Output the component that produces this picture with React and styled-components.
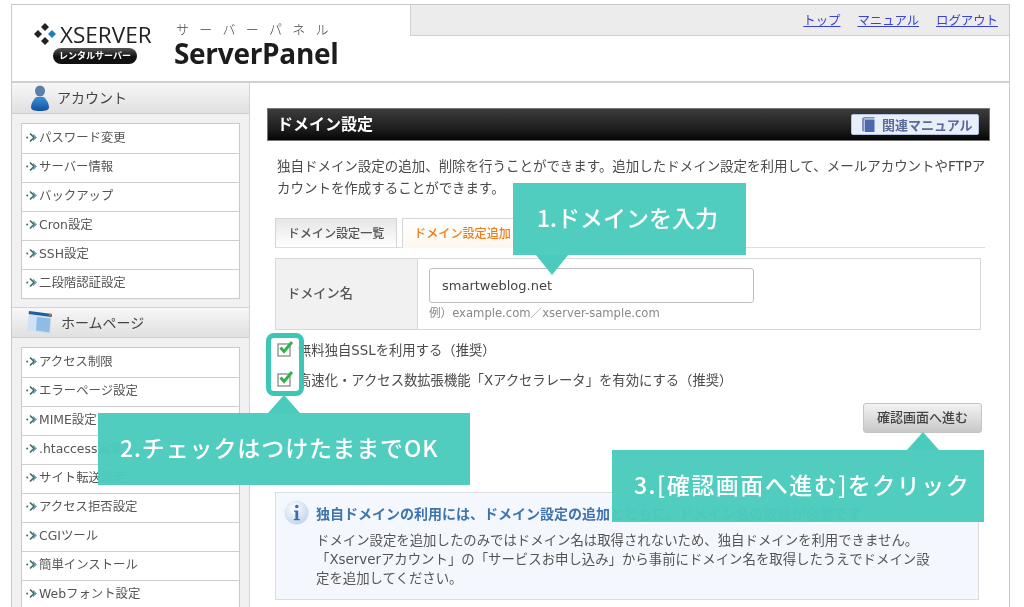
import styled, { createGlobalStyle } from "styled-components";

const GlobalStyle = createGlobalStyle`
  html, body {
    margin: 0;
    height: 607px;
    overflow: hidden;
    background: #fff;
  }
  * {
    box-sizing: border-box;
  }
  body {
    font-family: "DejaVu Sans", "Noto Sans CJK JP", sans-serif;
    color: #4a4a4a;
  }
`;

const Page = styled.div`
  position: relative;
  width: 1024px;
  height: 607px;
  overflow: hidden;
  padding: 4px 0 0 11px;
  filter: blur(0.3px);
`;

const Frame = styled.div`
  width: 999px;
  height: 640px;
  border: 1px solid #c9c9c9;
  border-width: 1.5px 1.5px 0 1.5px;
`;

const Header = styled.header`
  display: flex;
  height: 78px;
  border-bottom: 2px solid #d0d0d0;
`;

const LogoArea = styled.div`
  display: flex;
  width: 398px;
  padding: 13px 0 0 21px;
  gap: 21px;
`;

const Brand = styled.div`
  display: flex;
  flex-direction: column;
  width: 120px;
`;

const BrandRow = styled.div`
  display: flex;
  align-items: center;
  gap: 3px;
  height: 29px;
  padding-top: 3px;
`;

const BrandName = styled.span`
  font-family: "Open Sans", "Liberation Sans", sans-serif;
  font-size: 22.5px;
  color: #222;
`;

const RentalPill = styled.span`
  align-self: flex-start;
  margin: 1px 0 0 20px;
  width: 84px;
  height: 16px;
  line-height: 16px;
  border-radius: 8px;
  background: linear-gradient(#555, #111 55%);
  color: #fff;
  font-family: "Noto Sans CJK JP", sans-serif;
  font-size: 9px;
  font-weight: 700;
  text-align: center;
`;

const PanelTitle = styled.div`
  display: flex;
  flex-direction: column;
  padding-top: 2px;
`;

const PanelKana = styled.span`
  font-family: "Noto Sans CJK JP", sans-serif;
  font-size: 13px;
  font-weight: 300;
  line-height: 18px;
  letter-spacing: 10.3px;
  padding-left: 2px;
  color: #444;
`;

const PanelName = styled.span`
  font-family: "Open Sans", "Liberation Sans", sans-serif;
  font-size: 28px;
  font-weight: 700;
  line-height: 30px;
  color: #1c1c1c;
  letter-spacing: -0.3px;
`;

const TopLinks = styled.nav`
  flex: 1;
  display: flex;
  justify-content: flex-end;
  align-items: center;
  gap: 17px;
  height: 31px;
  padding-right: 11px;
  background: #ececec;
  border-left: 1.5px solid #d0d0d0;
  border-bottom: 1.5px solid #d0d0d0;
`;

const TopLink = styled.a`
  font-size: 12.4px;
  color: #3a3fe0;
  text-decoration: underline;
`;

const Body = styled.div`
  display: flex;
`;

const Sidebar = styled.aside`
  width: 238px;
  flex-shrink: 0;
  background: #f1f1f1;
  border-right: 1.5px solid #d4d4d4;
`;

const SectionHead = styled.div`
  display: flex;
  align-items: center;
  height: 31px;
  padding-left: ${(p) => p.$pad}px;
  gap: 8px;
  font-size: 14px;
  color: #444;
  background: linear-gradient(#f7f7f7, #e0e0e0);
  border-bottom: 1.5px solid #cfcfcf;
  border-top: ${(p) => (p.$first ? "0" : "1.5px solid #d4d4d4")};
`;

const SectionLabel = styled.span`
  padding-bottom: 2px;
`;

const Menu = styled.ul`
  list-style: none;
  margin: 9px 9px 8px 9px;
  padding: 0;
  background: #fff;
  border: 1.5px solid #cacaca;
`;

const MenuItem = styled.li`
  display: flex;
  align-items: center;
  height: 29px;
  padding: 0 0 ${(p) => (p.$first ? "3px" : "4px")} 4px;
  gap: 1px;
  font-size: 12.4px;
  color: #555;
  border-top: ${(p) => (p.$first ? "0" : "1.5px solid #cfcfcf")};
`;

const Main = styled.main`
  flex: 1;
  padding: 25px 19px 0 17px;
`;

const TitleBar = styled.div`
  display: flex;
  align-items: center;
  justify-content: space-between;
  height: 33px;
  padding: 0 10px 0 9px;
  background: linear-gradient(#3c3c3c, #1d1d1d 65%, #050505);
  border: 1px solid #777;
`;

const Title = styled.h1`
  margin: 0 0 3px 0;
  font-size: 16px;
  font-weight: 700;
  color: #fff;
`;

const ManualButton = styled.span`
  display: flex;
  align-items: center;
  gap: 7px;
  width: 128px;
  height: 21px;
  padding: 0 0 1px 10px;
  background: #e9eefb;
  border: 1px solid #b5c2e0;
  border-radius: 2px;
  font-size: 13px;
  font-weight: 700;
  color: #5a6a97;
`;

const Lead = styled.p`
  margin: 14px 0 19px 0;
  padding-left: 10px;
  font-size: 13.48px;
  line-height: 22px;
  white-space: nowrap;
  width: 720px;
`;

const Tabs = styled.div`
  display: flex;
  gap: 5px;
  width: 710px;
  margin-left: 8px;
  height: 30px;
  border-bottom: 1.5px solid #ddd;
`;

const Tab = styled.div`
  display: flex;
  align-items: center;
  justify-content: center;
  width: ${(p) => (p.$active ? "121px" : "122px")};
  height: 30px;
  padding-bottom: 2px;
  font-size: 12.1px;
  font-weight: 500;
  color: ${(p) => (p.$active ? "#f07d1a" : "#555")};
  background: ${(p) => (p.$active ? "linear-gradient(#fff, #fff7ee)" : "linear-gradient(#e6e6e6, #fff)")};
  border: 1.5px solid #d6d6d6;
  border-bottom: ${(p) => (p.$active ? "0" : "1.5px solid #ddd")};
`;

const FormTable = styled.div`
  display: flex;
  width: 706px;
  height: 72px;
  margin: 10px 0 0 8px;
  border: 1.5px solid #d8d8d8;
`;

const FieldLabel = styled.div`
  display: flex;
  align-items: center;
  width: 142px;
  padding: 0 0 3px 11px;
  background: #f1f1f1;
  border-right: 1.5px solid #d8d8d8;
  font-size: 13.2px;
  font-weight: 500;
  color: #555;
`;

const FieldCell = styled.div`
  flex: 1;
  padding: 9px 0 0 11px;
`;

const TextBox = styled.input`
  display: block;
  width: 325px;
  height: 35px;
  padding: 0 12px;
  border: 1.5px solid #bdbdbd;
  border-radius: 3px;
  font-family: "DejaVu Sans", sans-serif;
  font-size: 13px;
  color: #444;
  outline: none;
`;

const Hint = styled.div`
  margin-top: 2px;
  font-size: 11.6px;
  line-height: 16px;
  color: #888;
`;

const Checks = styled.div`
  margin: 4px 0 0 10px;
`;

const CheckRow = styled.div`
  display: flex;
  align-items: center;
  gap: 4px;
  height: 30px;
  font-size: 13.33px;
`;

const Actions = styled.div`
  display: flex;
  justify-content: flex-end;
  width: 715px;
  margin-top: 9px;
`;

const Confirm = styled.button`
  width: 119px;
  height: 30px;
  padding: 0 0 3px 0;
  background: linear-gradient(#f2f2f2, #c8c8c8);
  border: 1.5px solid #c4c4c4;
  border-radius: 3px;
  font-family: "Noto Sans CJK JP", sans-serif;
  font-size: 13px;
  font-weight: 500;
  color: #444;
`;

const InfoBox = styled.section`
  width: 704px;
  height: 108px;
  margin: 59px 0 0 8px;
  padding: 7px 0 0 8px;
  background: #f4f8fe;
  border: 1.5px solid #dcdcdc;
`;

const InfoHead = styled.div`
  display: flex;
  align-items: center;
  gap: 7px;
  font-size: 14px;
  font-weight: 700;
  color: #3f74ad;
  white-space: nowrap;
`;

const InfoText = styled.p`
  margin: 6px 0 0 32px;
  font-size: 13.4px;
  line-height: 19px;
  white-space: nowrap;
  color: #555;
`;

const Callout = styled.div`
  position: absolute;
  left: ${(p) => p.$left}px;
  top: ${(p) => p.$top}px;
  width: ${(p) => p.$width}px;
  height: 72px;
  display: flex;
  align-items: center;
  padding: 0 0 4px ${(p) => p.$pad}px;
  background: rgba(74, 203, 189, 0.97);
  color: #fff;
  font-family: "Noto Sans CJK JP", sans-serif;
  font-size: 23px;
  font-weight: 500;
  letter-spacing: ${(p) => p.$spacing}px;
  white-space: nowrap;

  &::after {
    content: "";
    position: absolute;
    left: ${(p) => p.$arrow}px;
    border-left: 16px solid transparent;
    border-right: 16px solid transparent;
    ${(p) => (p.$down
      ? "top: 100%; border-top: 20px solid #4acbbd;"
      : "bottom: 100%; border-bottom: 18px solid #4acbbd;")}
  }
`;

const Highlight = styled.div`
  position: absolute;
  left: 266px;
  top: 333px;
  width: 38px;
  height: 63px;
  border: 5px solid #3cc6b6;
  border-radius: 8px;
`;

const account = ["パスワード変更", "サーバー情報", "バックアップ", "Cron設定", "SSH設定", "二段階認証設定"];
const homepage = [
  "アクセス制限",
  "エラーページ設定",
  "MIME設定",
  ".htaccess編集",
  "サイト転送設定",
  "アクセス拒否設定",
  "CGIツール",
  "簡単インストール",
  "Webフォント設定",
];

function Bullet() {
  return (
    <svg width="12" height="11" viewBox="0 0 12 11">
      <circle cx="1.2" cy="5.5" r="1" fill="#3d6a70" />
      <path d="M4 1.5 8 5.5 4 9.5" fill="none" stroke="#3d6a70" strokeWidth="1.6" />
      <path d="M7 2.5 10 5.5 7 8.5" fill="none" stroke="#6f9ea3" strokeWidth="1.4" />
    </svg>
  );
}

function Diamonds() {
  return (
    <svg width="24" height="24" viewBox="0 0 24 24">
      <path d="M12 1 16 5 12 9 8 5Z" fill="#222" />
      <path d="M5 8 9 12 5 16 1 12Z" fill="#222" />
      <path d="M19 8 23 12 19 16 15 12Z" fill="#1f7fc4" />
      <path d="M12 15 16 19 12 23 8 19Z" fill="#222" />
    </svg>
  );
}

function PersonIcon() {
  return (
    <svg width="18" height="26" viewBox="0 0 18 26">
      <defs>
        <linearGradient id="personBody" x1="0" y1="0" x2="0" y2="1">
          <stop offset="0" stopColor="#3f8fd8" />
          <stop offset="1" stopColor="#0f4f9e" />
        </linearGradient>
      </defs>
      <ellipse cx="9" cy="6" rx="5" ry="5.5" fill="#5a7fa8" />
      <path d="M5 12h8c3 3 5 7 5 10 0 3-3 4-9 4s-9-1-9-4c0-3 2-7 5-10Z" fill="url(#personBody)" />
    </svg>
  );
}

function WindowIcon() {
  return (
    <svg width="26" height="26" viewBox="0 0 26 26">
      <path d="M2 1 25 4 23 24 0 21Z" fill="#cfe2f3" />
      <path d="M2 1 25 4 24.6 7 1.6 4Z" fill="#1f5f9e" />
      <path d="M22 3.6 24.8 4 24.6 6.4 21.8 6Z" fill="#d8632c" />
      <path d="M10 7 23.5 8.6 22.4 22.4 9 20.6Z" fill="#8fbce4" />
    </svg>
  );
}

function BookIcon() {
  return (
    <svg width="13" height="15" viewBox="0 0 13 15">
      <path d="M0 1.5 2 0H12.5V1.5H2.5V14.5H1L0 13.5Z" fill="#7d90c0" />
      <rect x="3" y="2.5" width="9.5" height="12.5" fill="#4c69ad" />
    </svg>
  );
}

function CheckIcon() {
  return (
    <svg width="17" height="17" viewBox="0 0 17 17">
      <rect x="1" y="3" width="12" height="12" fill="#fff" stroke="#8a8a8a" strokeWidth="1.3" />
      <path d="M3.5 6.5 7 10.5 15 1" fill="none" stroke="#2fb24a" strokeWidth="2.8" />
    </svg>
  );
}

function InfoIcon() {
  return (
    <svg width="25" height="25" viewBox="0 0 25 25">
      <defs>
        <radialGradient id="infoFill" cx="0.4" cy="0.35" r="0.75">
          <stop offset="0" stopColor="#ffffff" />
          <stop offset="1" stopColor="#bcd0ee" />
        </radialGradient>
      </defs>
      <circle cx="12.5" cy="12.5" r="12" fill="url(#infoFill)" />
      <circle cx="12.8" cy="6.5" r="1.8" fill="#3d6cae" />
      <path d="M10 10.5h4.2v8.5h1.6v1.2H9.8V19h1.6v-7.3H10Z" fill="#3d6cae" />
    </svg>
  );
}

export default function App() {
  return (
    <Page>
      <GlobalStyle />
      <Frame>
        <Header>
          <LogoArea>
            <Brand>
              <BrandRow>
                <Diamonds />
                <BrandName>XSERVER</BrandName>
              </BrandRow>
              <RentalPill>レンタルサーバー</RentalPill>
            </Brand>
            <PanelTitle>
              <PanelKana>サーバーパネル</PanelKana>
              <PanelName>ServerPanel</PanelName>
            </PanelTitle>
          </LogoArea>
          <TopLinks>
            <TopLink>トップ</TopLink>
            <TopLink>マニュアル</TopLink>
            <TopLink>ログアウト</TopLink>
          </TopLinks>
        </Header>
        <Body>
          <Sidebar>
            <SectionHead $first $pad={19}>
              <PersonIcon />
              <SectionLabel>アカウント</SectionLabel>
            </SectionHead>
            <Menu>
              {account.map((item, index) => (
                <MenuItem key={item} $first={index === 0}>
                  <Bullet />
                  {item}
                </MenuItem>
              ))}
            </Menu>
            <SectionHead $pad={15}>
              <WindowIcon />
              <SectionLabel>ホームページ</SectionLabel>
            </SectionHead>
            <Menu>
              {homepage.map((item, index) => (
                <MenuItem key={item} $first={index === 0}>
                  <Bullet />
                  {item}
                </MenuItem>
              ))}
            </Menu>
          </Sidebar>
          <Main>
            <TitleBar>
              <Title>ドメイン設定</Title>
              <ManualButton>
                <BookIcon />
                関連マニュアル
              </ManualButton>
            </TitleBar>
            <Lead>
              独自ドメイン設定の追加、削除を行うことができます。追加したドメイン設定を利用して、メールアカウントやFTPア
              <br />
              カウントを作成することができます。
            </Lead>
            <Tabs>
              <Tab>ドメイン設定一覧</Tab>
              <Tab $active>ドメイン設定追加</Tab>
            </Tabs>
            <FormTable>
              <FieldLabel>ドメイン名</FieldLabel>
              <FieldCell>
                <TextBox defaultValue="smartweblog.net" />
                <Hint>例）example.com／xserver-sample.com</Hint>
              </FieldCell>
            </FormTable>
            <Checks>
              <CheckRow>
                <CheckIcon />
                無料独自SSLを利用する（推奨）
              </CheckRow>
              <CheckRow>
                <CheckIcon />
                高速化・アクセス数拡張機能「Xアクセラレータ」を有効にする（推奨）
              </CheckRow>
            </Checks>
            <Actions>
              <Confirm>確認画面へ進む</Confirm>
            </Actions>
            <InfoBox>
              <InfoHead>
                <InfoIcon />
                独自ドメインの利用には、ドメイン設定の追加とともに、ドメイン名の取得が必要です
              </InfoHead>
              <InfoText>
                ドメイン設定を追加したのみではドメイン名は取得されないため、独自ドメインを利用できません。
                <br />
                「Xserverアカウント」の「サービスお申し込み」から事前にドメイン名を取得したうえでドメイン設
                <br />
                定を追加してください。
              </InfoText>
            </InfoBox>
          </Main>
        </Body>
      </Frame>
      <Highlight />
      <Callout $left={513} $top={183} $width={233} $pad={24} $arrow={23} $spacing={0} $down>
        1.ドメインを入力
      </Callout>
      <Callout $left={98} $top={413} $width={372} $pad={22} $arrow={170} $spacing={0.9}>
        2.チェックはつけたままでOK
      </Callout>
      <Callout $left={612} $top={450} $width={372} $pad={22} $arrow={295} $spacing={1.5}>
        3.[確認画面へ進む]をクリック
      </Callout>
    </Page>
  );
}
